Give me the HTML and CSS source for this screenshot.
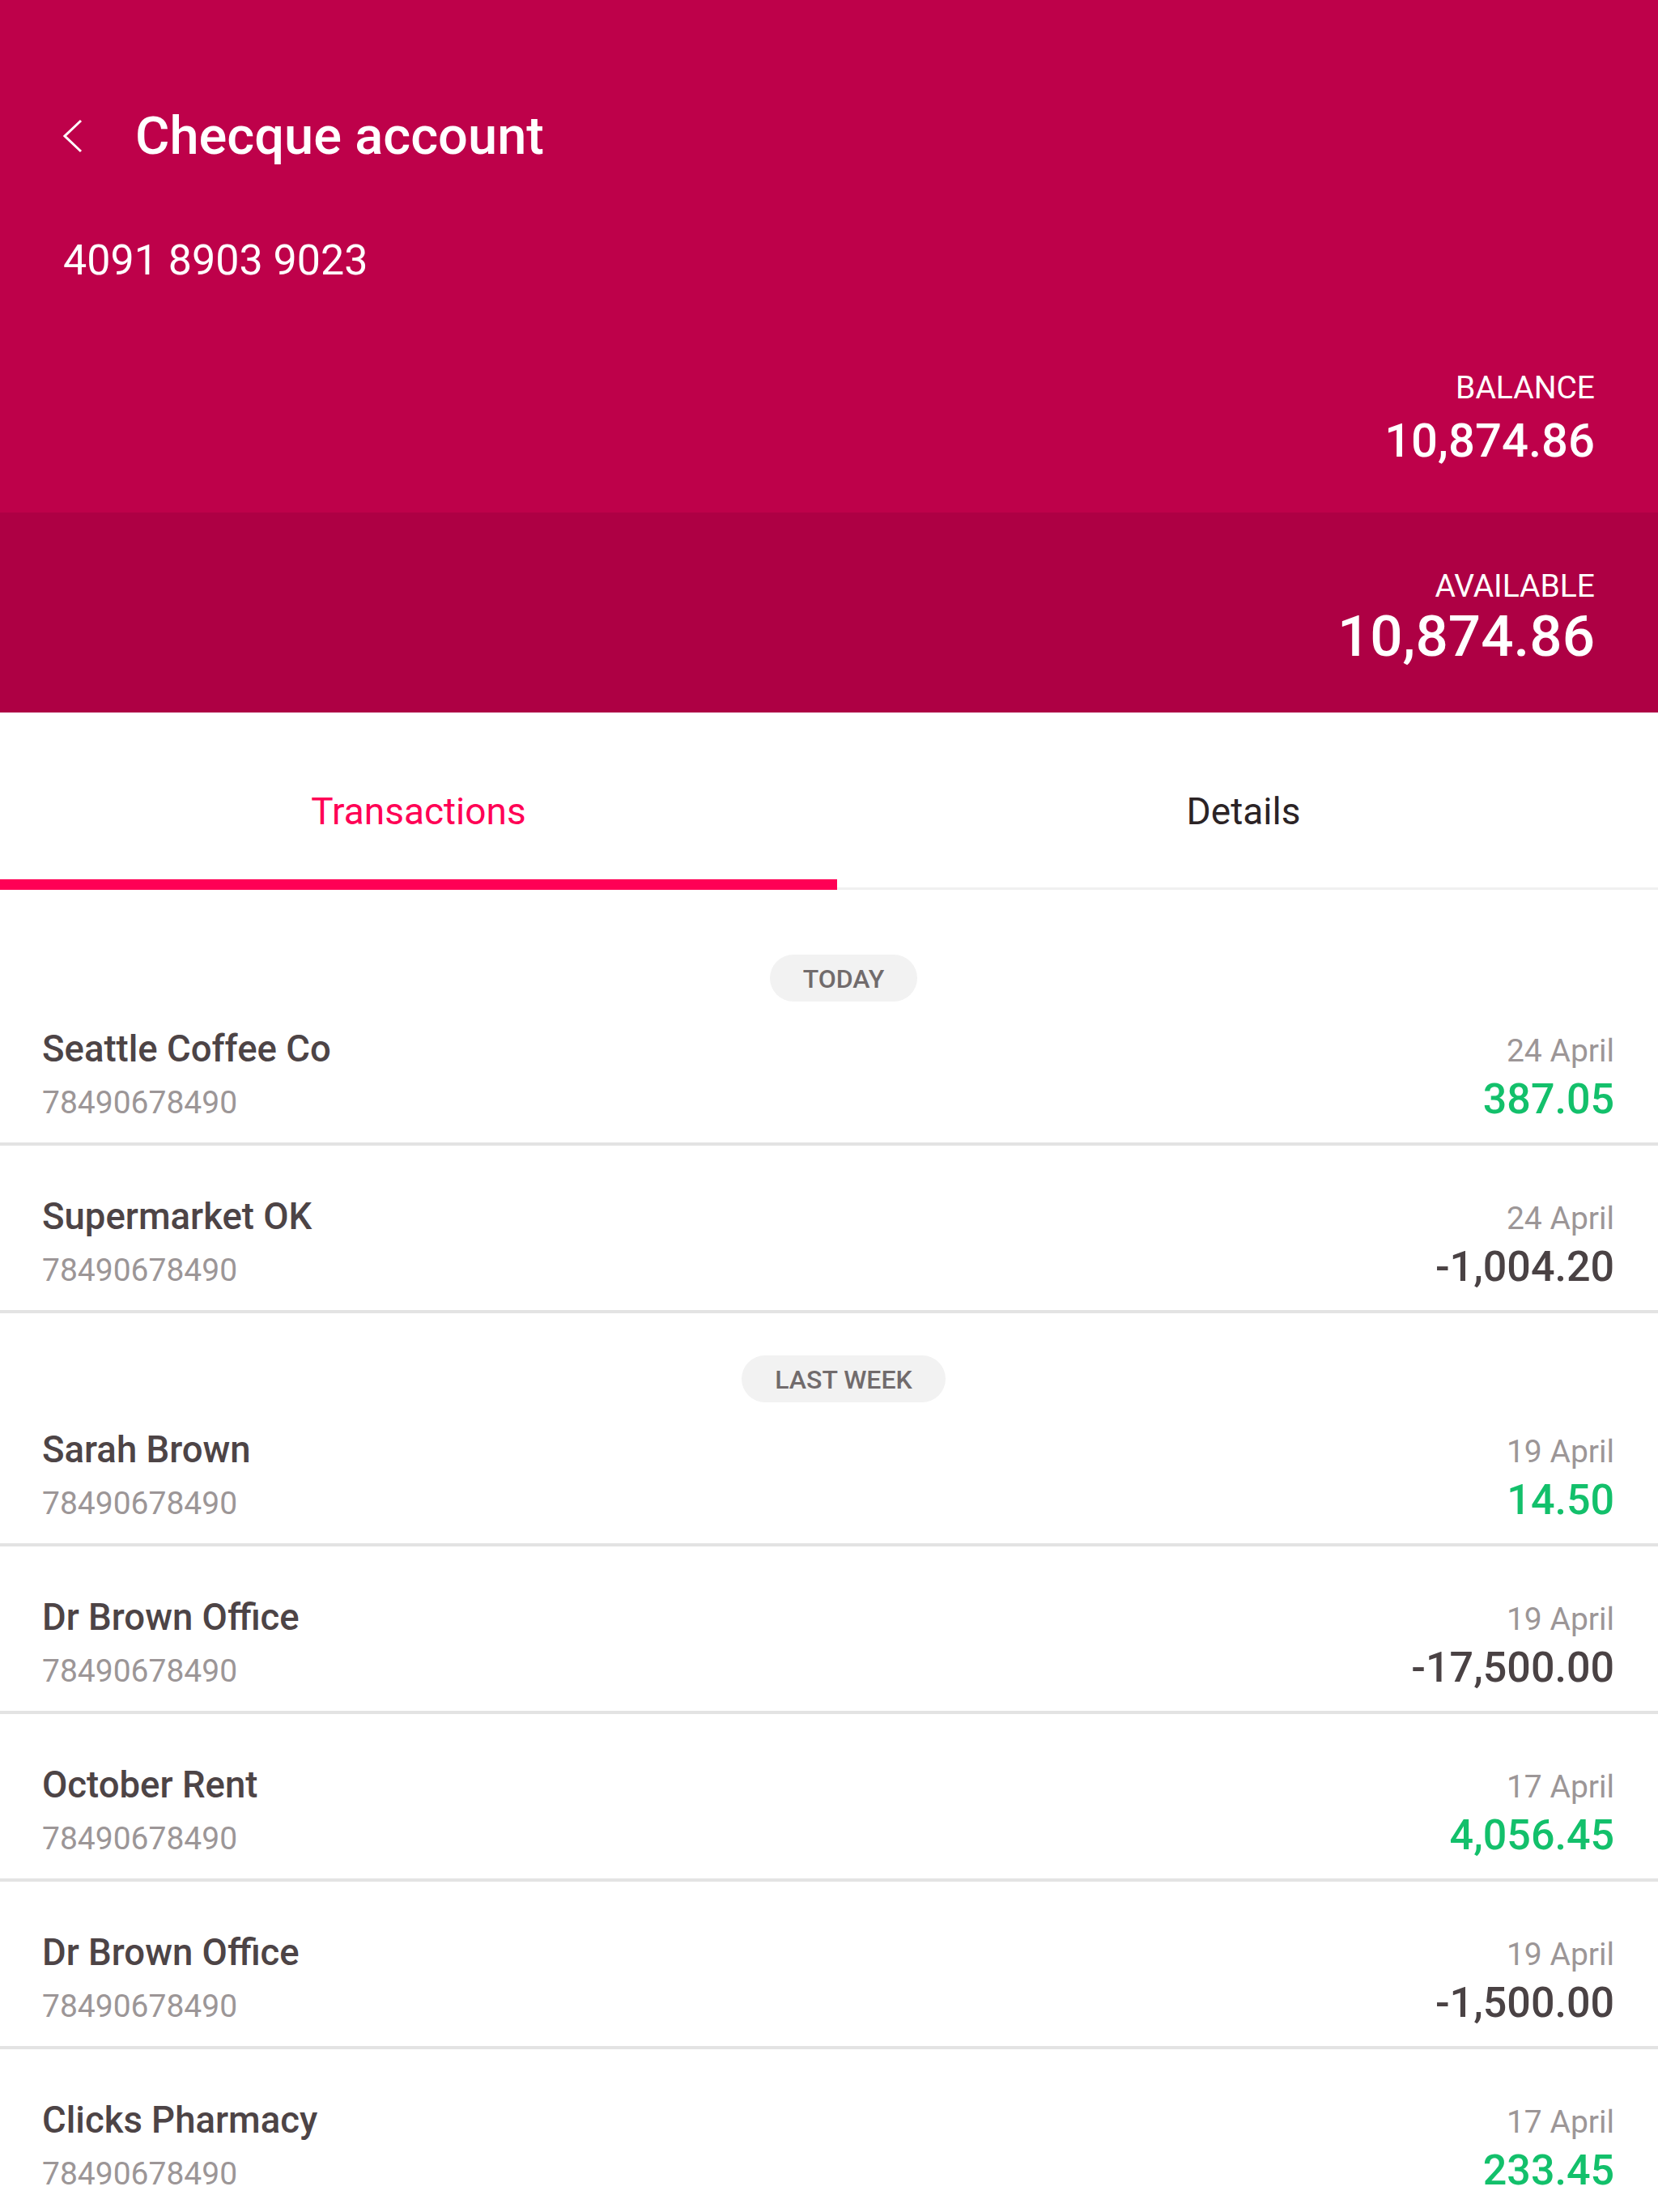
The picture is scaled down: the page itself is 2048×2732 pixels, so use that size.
FILE: index.html
```html
<!DOCTYPE html>
<html>
    <head>
        <meta name="viewport" content="width=device-width, initial-scale=1.0">
        <meta charset="utf-8" />
        <title>Checque account</title>
        <link rel="stylesheet" href="styles.css">
    </head>
    <body>

        <header class="acchead">
            <div class="acchead-main">
                <div class="titlebar">
                    <svg class="back" viewBox="0 0 30 44" width="30" height="44">
                        <path d="M22 3 L2 22 L22 41" fill="none" stroke="#ffffff" stroke-width="3"/>
                    </svg>
                    <h1 class="title">Checque account</h1>
                </div>
                <div class="accno">4091 8903 9023</div>
                <div class="figure balance">
                    <div class="figure-label">BALANCE</div>
                    <div class="figure-value">10,874.86</div>
                </div>
            </div>
            <div class="acchead-avail">
                <div class="figure-label">AVAILABLE</div>
                <div class="figure-value big">10,874.86</div>
            </div>
        </header>

        <nav class="tabs">
            <div class="tab active">Transactions</div>
            <div class="tab">Details</div>
        </nav>

        <div class="txnlist">
            <div class="day"><span class="pill">TODAY</span></div>
            <div class="txn">
                <div class="txn-name">Seattle Coffee Co</div>
                <div class="txn-date">24 April</div>
                <div class="txn-ref">78490678490</div>
                <div class="txn-amt credit">387.05</div>
            </div>
            <div class="txn">
                <div class="txn-name">Supermarket OK</div>
                <div class="txn-date">24 April</div>
                <div class="txn-ref">78490678490</div>
                <div class="txn-amt">-1,004.20</div>
            </div>

            <div class="day"><span class="pill">LAST WEEK</span></div>
            <div class="txn">
                <div class="txn-name">Sarah Brown</div>
                <div class="txn-date">19 April</div>
                <div class="txn-ref">78490678490</div>
                <div class="txn-amt credit">14.50</div>
            </div>
            <div class="txn">
                <div class="txn-name">Dr Brown Office</div>
                <div class="txn-date">19 April</div>
                <div class="txn-ref">78490678490</div>
                <div class="txn-amt">-17,500.00</div>
            </div>
            <div class="txn">
                <div class="txn-name">October Rent</div>
                <div class="txn-date">17 April</div>
                <div class="txn-ref">78490678490</div>
                <div class="txn-amt credit">4,056.45</div>
            </div>
            <div class="txn">
                <div class="txn-name">Dr Brown Office</div>
                <div class="txn-date">19 April</div>
                <div class="txn-ref">78490678490</div>
                <div class="txn-amt">-1,500.00</div>
            </div>
            <div class="txn">
                <div class="txn-name">Clicks Pharmacy</div>
                <div class="txn-date">17 April</div>
                <div class="txn-ref">78490678490</div>
                <div class="txn-amt credit">233.45</div>
            </div>
        </div>

    </body>
</html>
```

FILE: styles.css
```css
*
{
    box-sizing: border-box;
}

body
{
    font-family: Roboto, "Noto Sans", Arial, sans-serif;
    margin: 0px;
    width: 2048px;
    height: 2732px;
    overflow: hidden;
    background: #ffffff;
}

/* account header */
.acchead
{
    color: #ffffff;
}
.acchead-main
{
    background: #be014a;
    padding: 128px 78px 57px 78px;
}
.titlebar
{
    display: flex;
    align-items: center;
    height: 80px;
}
.back
{
    display: block;
    margin-right: 59px;
}
.title
{
    margin: 0;
    font-size: 65px;
    font-weight: 500;
    line-height: 80px;
}
.accno
{
    margin-top: 84px;
    font-size: 52px;
    line-height: 60px;
}
.figure
{
    text-align: right;
}
.balance
{
    margin-top: 105px;
}
.figure-label
{
    font-size: 39px;
    line-height: 44px;
}
.figure-value
{
    margin-top: 11px;
    font-size: 58px;
    font-weight: 500;
    line-height: 64px;
}
.acchead-avail
{
    background: #ae0044;
    padding: 69px 78px 58px 78px;
    text-align: right;
}
.figure-value.big
{
    margin-top: 4px;
    font-size: 71px;
    line-height: 72px;
}

/* tabs */
.tabs
{
    display: flex;
}
.tab
{
    flex: 1;
    text-align: center;
    font-size: 46px;
    line-height: 52px;
    color: #2b2325;
    padding: 96px 10px 68px 0;
    border-bottom: 3px solid #f0f0f0;
}
.tab.active
{
    flex: 0 0 1034px;
    padding-right: 0;
    color: #ff0055;
    border-bottom-color: #ff0055;
    box-shadow: inset 0 -10px 0 #ff0055;
}

/* transaction list */
.txnlist
{
    padding-top: 28px;
}
.day
{
    display: flex;
    justify-content: center;
    padding: 52px 0 0 36px;
}
.pill
{
    display: block;
    height: 58px;
    padding: 3px 41px 0 41px;
    border-radius: 29px;
    background: #f2f2f2;
    color: #716b6c;
    font-size: 32px;
    font-weight: 500;
    line-height: 55px;
}
.txn
{
    display: grid;
    grid-template-columns: 1fr auto;
    align-items: baseline;
    row-gap: 4px;
    padding: 62px 54px 23px 52px;
    border-bottom: 4px solid #e3e3e3;
}
.day + .txn
{
    padding-top: 33px;
}
.txn-name
{
    font-size: 45.5px;
    font-weight: 500;
    line-height: 52px;
    color: #4d4446;
}
.txn-date,
.txn-ref
{
    font-size: 39px;
    line-height: 52px;
    color: #9c9697;
}
.txn-date,
.txn-amt
{
    text-align: right;
}
.txn-amt
{
    font-size: 52px;
    font-weight: 500;
    line-height: 60px;
    color: #4a4244;
}
.txn-amt.credit
{
    color: #13c06b;
}
```
